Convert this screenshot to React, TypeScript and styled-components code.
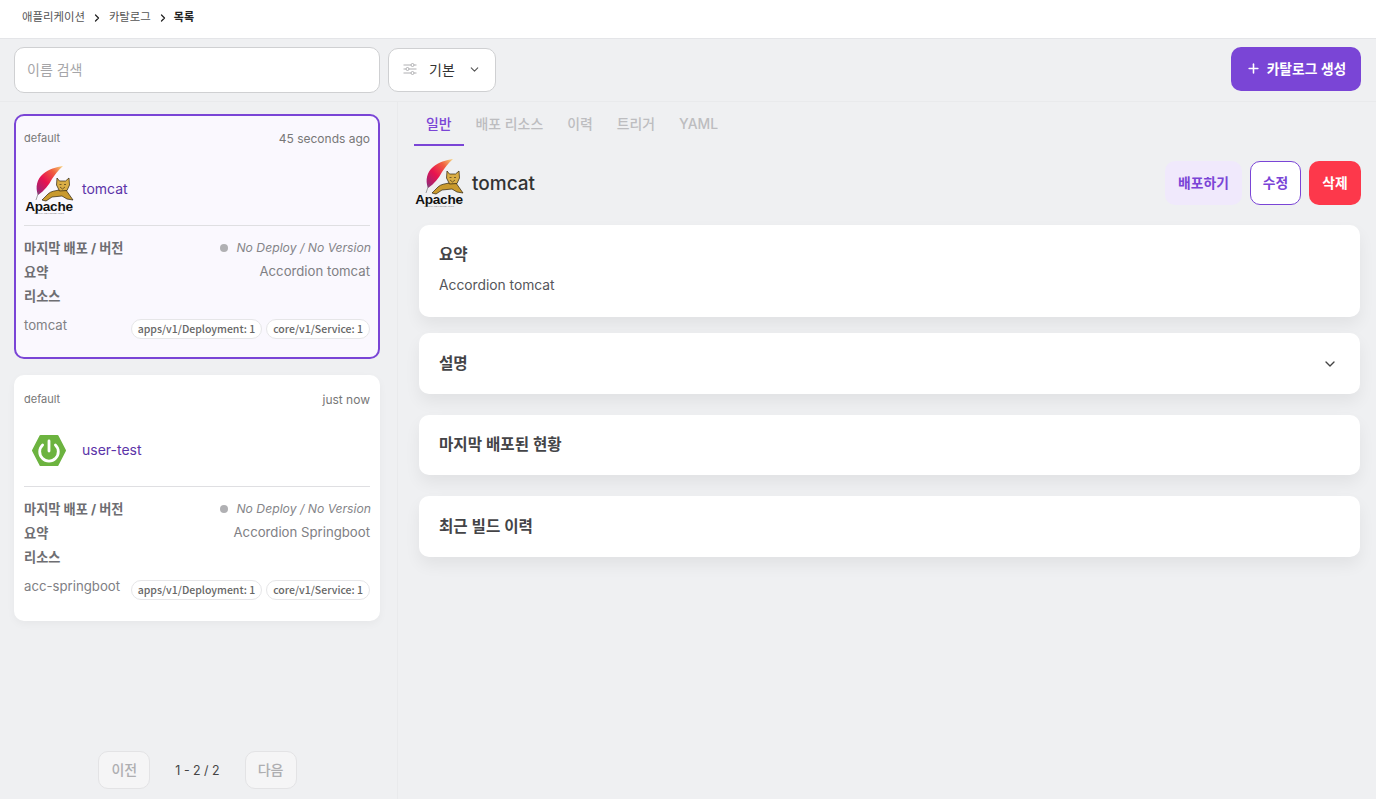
import React from "react";
import styled, { createGlobalStyle } from "styled-components";
import { ChevronDown, ChevronRight, Plus } from "lucide-react";

const GlobalStyle = createGlobalStyle`
  html, body {
    margin: 0;
    padding: 0;
    height: 100%;
    overflow: hidden;
  }
  body {
    background: #eff0f2;
    font-family: Inter, "Noto Sans CJK KR", sans-serif;
    color: #333;
  }
  * {
    box-sizing: border-box;
  }
`;

const catalogs = [
  {
    name: "user",
    title: "tomcat",
    time: "45 seconds ago",
    summary: "Accordion tomcat",
    resource: "tomcat",
    logo: "apache",
    active: true,
  },
  {
    name: "spring",
    title: "user-test",
    time: "just now",
    summary: "Accordion Springboot",
    resource: "acc-springboot",
    logo: "spring",
    active: false,
  },
];

const ApacheLogo = ({ id }: { id: string }) => (
  <LogoSvg viewBox="0 0 50 50">
    <defs>
      <linearGradient id={id} x1="0" y1="1" x2="1" y2="0">
        <stop offset="0" stopColor="#8a2a80" />
        <stop offset="0.4" stopColor="#e8134f" />
        <stop offset="0.72" stopColor="#f0603f" />
        <stop offset="1" stopColor="#f7d67a" />
      </linearGradient>
    </defs>
    <path d="M14 31 C11 23 13 15 19 10 C25 5 32 3 39 2 C34 6 31 11 28 15 C25 21 20 27 14 31 Z" fill={`url(#${id})`} />
    <path d="M12 36 L15 27" stroke="#666" strokeWidth="0.6" />
    <path d="M18 36 L24 30 C27 27 31 27 35 26 L42 26 L49 36 L43 35 L38 32 L28 33 L22 37 Z" fill="#c99a2e" stroke="#2e2410" strokeWidth="0.7" strokeLinejoin="round" />
    <path d="M33 14 L35.5 17 L41.5 17 L45 14 L45.5 21 L43 26.5 L35.5 27 L32.5 21 Z" fill="#d9ad45" stroke="#2e2410" strokeWidth="0.7" strokeLinejoin="round" />
    <path d="M36 23 L38.5 25 L41 23 M35.5 20.5 L37.5 20.5 M40 20.5 L42 20.5" stroke="#2e2410" strokeWidth="0.6" fill="none" />
    <text x="25" y="47" textAnchor="middle" fontFamily="Liberation Sans" fontWeight="700" fontSize="13.6" letterSpacing="-0.3" fill="#111">Apache</text>
    <text x="25" y="49.8" textAnchor="middle" fontFamily="Liberation Sans" fontSize="2.4" fill="#777">SOFTWARE FOUNDATION</text>
  </LogoSvg>
);

const SpringLogo = () => (
  <LogoSvg viewBox="0 0 50 50">
    <path d="M16.5 11 H33.5 L41 25.5 L33.5 40 H16.5 L9 25.5 Z" fill="#6cb33f" stroke="#6cb33f" strokeWidth="2" strokeLinejoin="round" />
    <path d="M18.6 20 A9.3 9.3 0 1 0 31.4 20" fill="none" stroke="#fff" strokeWidth="2.8" strokeLinecap="round" />
    <path d="M25 16 V26" stroke="#fff" strokeWidth="2.8" strokeLinecap="round" />
  </LogoSvg>
);

const FilterIcon = () => (
  <svg width="14" height="12" viewBox="0 0 14 12" fill="none" stroke="#b0b0b3" strokeWidth="1">
    <path d="M0.5 2 H8 M11 2 H13.5 M0.5 6 H3 M6 6 H13.5 M0.5 10 H8 M11 10 H13.5" />
    <circle cx="9.5" cy="2" r="1.5" />
    <circle cx="4.5" cy="6" r="1.5" />
    <circle cx="9.5" cy="10" r="1.5" />
  </svg>
);

const CatalogCard = ({ item }: { item: (typeof catalogs)[number] }) => (
  <Card $active={item.active}>
    <CardTop>
      <small>default</small>
      <span>{item.time}</span>
    </CardTop>
    <CardName>
      {item.logo === "apache" ? <ApacheLogo id="feather-card" /> : <SpringLogo />}
      <span>{item.title}</span>
    </CardName>
    <InfoRow>
      <b>마지막 배포 / 버전</b>
      <em>
        <Dot />
        No Deploy / No Version
      </em>
    </InfoRow>
    <InfoRow>
      <b>요약</b>
      <span>{item.summary}</span>
    </InfoRow>
    <InfoRow>
      <b>리소스</b>
    </InfoRow>
    <ResourceRow>
      <span>{item.resource}</span>
      <Chips>
        <Chip>apps/v1/Deployment: 1</Chip>
        <Chip>core/v1/Service: 1</Chip>
      </Chips>
    </ResourceRow>
  </Card>
);

export default function App() {
  return (
    <Page>
      <GlobalStyle />
      <Breadcrumb>
        <span>애플리케이션</span>
        <ChevronRight size={12} strokeWidth={2.5} color="#222" />
        <span>카탈로그</span>
        <ChevronRight size={12} strokeWidth={2.5} color="#222" />
        <strong>목록</strong>
      </Breadcrumb>
      <Toolbar>
        <SearchInput placeholder="이름 검색" />
        <FilterSelect>
          <FilterIcon />
          <span>기본</span>
          <ChevronDown size={13} color="#555" />
        </FilterSelect>
        <CreateButton>
          <Plus size={15} strokeWidth={2.5} />
          카탈로그 생성
        </CreateButton>
      </Toolbar>
      <Main>
        <ListPane>
          <CardList>
            {catalogs.map((item) => (
              <CatalogCard key={item.name} item={item} />
            ))}
          </CardList>
          <Pager>
            <PageButton disabled>이전</PageButton>
            <span>1 - 2 / 2</span>
            <PageButton disabled>다음</PageButton>
          </Pager>
        </ListPane>
        <DetailPane>
          <Tabs>
            <Tab $active>일반</Tab>
            <Tab>배포 리소스</Tab>
            <Tab>이력</Tab>
            <Tab>트리거</Tab>
            <Tab>YAML</Tab>
          </Tabs>
          <DetailHead>
            <ApacheLogo id="feather-head" />
            <h2>tomcat</h2>
            <Actions>
              <DeployButton>배포하기</DeployButton>
              <EditButton>수정</EditButton>
              <DeleteButton>삭제</DeleteButton>
            </Actions>
          </DetailHead>
          <Sections>
            <Section $height={92}>
              <h3>요약</h3>
              <p>Accordion tomcat</p>
            </Section>
            <Section $height={61} $row>
              <h3>설명</h3>
              <ChevronDown size={16} color="#444" />
            </Section>
            <Section $height={60} $row>
              <h3>마지막 배포된 현황</h3>
            </Section>
            <Section $height={61} $row>
              <h3>최근 빌드 이력</h3>
            </Section>
          </Sections>
        </DetailPane>
      </Main>
    </Page>
  );
}

const Page = styled.div`
  width: 100vw;
  height: 100vh;
  display: flex;
  flex-direction: column;
`;

const Breadcrumb = styled.div`
  height: 39px;
  flex-shrink: 0;
  background: #fff;
  border-bottom: 1px solid #e4e5e8;
  display: flex;
  align-items: flex-start;
  gap: 6px;
  padding: 9px 0 0 22px;
  font-size: 11.4px;
  line-height: 16px;
  color: #555;
  svg {
    margin-top: 3px;
  }
  strong {
    color: #222;
    font-weight: 600;
    font-size: 11px;
    margin-left: -1px;
  }
`;

const Toolbar = styled.div`
  height: 63px;
  flex-shrink: 0;
  display: flex;
  align-items: center;
  padding: 0 15px 0 14px;
  border-bottom: 1px solid #e9eaec;
`;

const SearchInput = styled.input`
  width: 366px;
  height: 46px;
  border: 1px solid #cfd0d2;
  border-radius: 10px;
  background: #fff;
  padding: 0 12px 2px;
  font: 400 14px Inter, "Noto Sans CJK KR", sans-serif;
  outline: none;
  &::placeholder {
    color: #a5a5a8;
  }
`;

const FilterSelect = styled.div`
  width: 108px;
  height: 44px;
  margin-left: 8px;
  padding: 0 14px 2px;
  display: flex;
  align-items: center;
  border: 1px solid #cfd0d2;
  border-radius: 10px;
  background: #fff;
  font-size: 14px;
  color: #333;
  span {
    margin: 0 auto 0 12px;
  }
`;

const BaseButton = styled.button`
  height: 44px;
  border: 0;
  border-radius: 10px;
  font: 600 13.8px Inter, "Noto Sans CJK KR", sans-serif;
  cursor: pointer;
  padding: 0 0 2px;
`;

const CreateButton = styled(BaseButton)`
  width: 130px;
  margin-left: auto;
  margin-top: -2px;
  background: #7a45d6;
  color: #fff;
  display: flex;
  align-items: center;
  justify-content: center;
  gap: 6px;
`;

const Main = styled.div`
  flex: 1;
  min-height: 0;
  display: flex;
`;

const ListPane = styled.div`
  width: 398px;
  flex-shrink: 0;
  border-right: 1px solid #e9eaec;
  padding: 12px 16px 10px 14px;
  display: flex;
  flex-direction: column;
`;

const CardList = styled.div`
  display: flex;
  flex-direction: column;
  gap: 16px;
  flex: 1;
`;

const Card = styled.div<{ $active?: boolean }>`
  width: 366px;
  height: ${(p) => (p.$active ? "245px" : "246px")};
  padding: ${(p) => (p.$active ? "14px 8px 0" : "16px 10px 0")};
  border: ${(p) => (p.$active ? "2px solid #7a45d6" : "0")};
  border-radius: 10px;
  background: ${(p) => (p.$active ? "#faf8fe" : "#fff")};
  box-shadow: ${(p) => (p.$active ? "none" : "0 3px 8px rgba(0, 0, 0, 0.04)")};
`;

const CardTop = styled.div`
  display: flex;
  justify-content: space-between;
  align-items: center;
  height: 16px;
  color: #777;
  font-size: 12px;
  small {
    font-size: 11px;
    margin-top: -1px;
  }
`;

const CardName = styled.div`
  height: 68px;
  margin: 12px 0 9px;
  padding-bottom: 5px;
  display: flex;
  align-items: center;
  gap: 8px;
  border-bottom: 1px solid #dfdfe2;
  font-size: 14px;
  color: #5b34a8;
  span {
    padding-bottom: 2px;
  }
`;

const LogoSvg = styled.svg`
  width: 50px;
  height: 50px;
  flex-shrink: 0;
`;

const InfoRow = styled.div`
  height: 24px;
  display: flex;
  justify-content: space-between;
  align-items: center;
  font-size: 13.2px;
  color: #808084;
  b {
    color: #6e6e72;
    font-weight: 700;
    font-size: 13.2px;
  }
  em {
    display: flex;
    align-items: center;
    margin-right: -1px;
    font-size: 12.2px;
    color: #858589;
  }
`;

const Dot = styled.i`
  width: 8px;
  height: 8px;
  border-radius: 50%;
  background: #b0b0b3;
  margin: 2px 8px 0 0;
`;

const ResourceRow = styled.div`
  margin-top: 10px;
  display: flex;
  justify-content: space-between;
  align-items: flex-start;
  font-size: 13.2px;
  color: #808084;
`;

const Chips = styled.div`
  display: flex;
  gap: 4px;
  margin-top: 2px;
`;

const Chip = styled.span`
  height: 20px;
  padding: 0 6px;
  border: 1px solid #e6e6e8;
  border-radius: 10px;
  background: #fff;
  font-family: "Noto Sans CJK KR", sans-serif;
  font-size: 10.5px;
  font-weight: 500;
  line-height: 18px;
  color: #666;
  white-space: nowrap;
`;

const Pager = styled.div`
  display: flex;
  align-items: center;
  justify-content: center;
  gap: 25px;
  font-size: 12.4px;
  color: #444;
`;

const PageButton = styled.button`
  width: 52px;
  height: 38px;
  border: 1px solid #e3e3e5;
  border-radius: 10px;
  background: #f5f5f6;
  color: #aeaeb1;
  font: 500 14px Inter, "Noto Sans CJK KR", sans-serif;
  padding: 0 0 2px;
`;

const DetailPane = styled.div`
  flex: 1;
  min-width: 0;
  padding: 0 15px 0 16px;
`;

const Tabs = styled.div`
  display: flex;
  height: 44px;
`;

const Tab = styled.div<{ $active?: boolean }>`
  padding: 12px 12px 0;
  font-size: 13.9px;
  line-height: 20px;
  font-weight: 500;
  color: ${(p) => (p.$active ? "#7a45d6" : "#bdbdc0")};
  border-bottom: 2px solid ${(p) => (p.$active ? "#7a45d6" : "transparent")};
`;

const DetailHead = styled.div`
  height: 50px;
  margin-top: 12px;
  display: flex;
  align-items: center;
  gap: 8px;
  & > svg {
    margin: -3px 0 0 0;
  }
  h2 {
    margin: 0;
    font-size: 19px;
    font-weight: 500;
    color: #333;
  }
`;

const Actions = styled.div`
  margin-left: auto;
  display: flex;
  gap: 8px;
`;

const DeployButton = styled(BaseButton)`
  width: 77px;
  background: #f0e9fc;
  color: #7a45d6;
`;

const EditButton = styled(BaseButton)`
  width: 51px;
  background: #fff;
  color: #7a45d6;
  border: 1px solid #7a45d6;
`;

const DeleteButton = styled(BaseButton)`
  width: 52px;
  background: #fd384b;
  color: #fff;
`;

const Sections = styled.div`
  margin: 17px 1px 0 5px;
  display: flex;
  flex-direction: column;
`;

const Section = styled.div<{ $height: number; $row?: boolean }>`
  height: ${(p) => p.$height}px;
  margin-bottom: ${(p) => (p.$height === 92 ? "16px" : "21px")};
  padding: ${(p) => (p.$row ? "0 22px 0 20px" : "20px 20px 0")};
  display: flex;
  flex-direction: ${(p) => (p.$row ? "row" : "column")};
  align-items: ${(p) => (p.$row ? "center" : "flex-start")};
  justify-content: ${(p) => (p.$row ? "space-between" : "flex-start")};
  background: #fff;
  border-radius: 10px;
  box-shadow: 0 8px 16px rgba(0, 0, 0, 0.06);
  h3 {
    margin: 0;
    font-size: 15.6px;
    line-height: 20px;
    font-weight: 600;
    color: #444447;
  }
  p {
    margin: 10px 0 0;
    font-size: 13.8px;
    line-height: 20px;
    color: #55555a;
  }
`;
